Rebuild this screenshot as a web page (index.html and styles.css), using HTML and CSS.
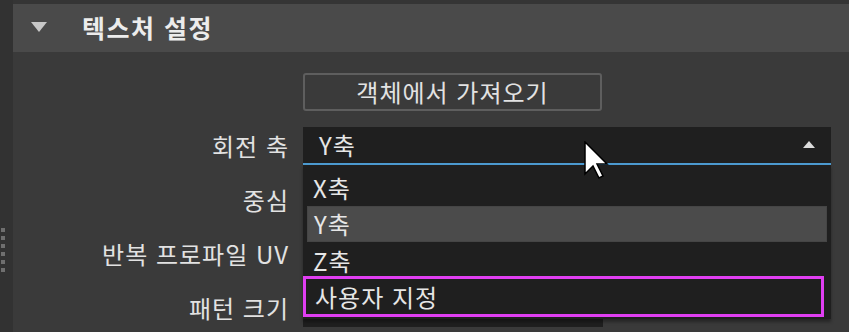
FILE: index.html
```html
<!DOCTYPE html>
<html lang="ko">
<head>
<meta charset="utf-8">
<link rel="stylesheet" href="styles.css">
</head>
<body>
<div class="app">
  <div class="grip">
    <span class="dot"></span><span class="dot"></span><span class="dot"></span>
    <span class="dot"></span><span class="dot"></span><span class="dot"></span>
  </div>
  <div class="main">
    <div class="panel">
      <div class="header">
        <span class="tri-down"></span>
        <span class="title">텍스처 설정</span>
      </div>
      <div class="content">
        <div class="form">
          <div class="label"></div>
          <div class="ctrl"><div class="button">객체에서 가져오기</div></div>

          <div class="label">회전 축</div>
          <div class="ctrl">
            <div class="select"><span>Y축</span><span class="tri-up"></span></div>
          </div>

          <div class="label">중심</div>
          <div class="ctrl"><div class="field"></div></div>

          <div class="label">반복 프로파일 UV</div>
          <div class="ctrl"><div class="field"></div></div>

          <div class="label">패턴 크기</div>
          <div class="ctrl"><div class="field"></div></div>
        </div>

        <div class="menu">
          <div class="item">X축</div>
          <div class="item active">Y축</div>
          <div class="item short">Z축</div>
          <div class="item custom">사용자 지정</div>
        </div>

        <svg class="cursor" width="26" height="40" viewBox="0 0 26 40">
          <polygon points="1,1 1,33 9,25 15,37 19,35 13,23 23,23" fill="#ffffff" stroke="#000000" stroke-width="1.5" stroke-linejoin="miter"/>
        </svg>
      </div>
    </div>
  </div>
</div>
</body>
</html>
```

FILE: styles.css
```css
* { box-sizing: border-box; }
html, body {
  margin: 0;
  padding: 0;
  background: #343434;
  font-family: "Noto Sans CJK KR", "Noto Sans", sans-serif;
  color: #e4e4e4;
}
.app {
  display: flex;
  width: 849px;
  height: 332px;
  overflow: hidden;
}
.grip {
  width: 13px;
  background: #323232;
  display: flex;
  flex-direction: column;
  gap: 4px;
  padding: 228px 0 0 1px;
}
.dot {
  width: 4px;
  height: 4px;
  background: #6f6f6f;
}
.main {
  flex: 1;
  padding-top: 4px;
  background: #353535;
  display: flex;
  flex-direction: column;
}
.panel {
  flex: 1;
  background: #3a3a3a;
}
.header {
  height: 48px;
  background: #4a4a4a;
  display: flex;
  align-items: center;
}
.tri-down {
  width: 0;
  height: 0;
  margin-left: 18px;
  margin-top: -2px;
  border-left: 8px solid transparent;
  border-right: 8px solid transparent;
  border-top: 10px solid #c8c8c8;
}
.title {
  margin-left: 35px;
  font-size: 25px;
  font-weight: bold;
  letter-spacing: 1.5px;
  line-height: 1;
  color: #ececec;
  margin-top: -2px;
}
.content {
  position: relative;
  padding-top: 21px;
}
.form {
  display: grid;
  grid-template-columns: 276px 528px;
  column-gap: 14px;
  grid-auto-rows: 38px;
  row-gap: 16px;
}
.label {
  font-size: 24px;
  letter-spacing: 1px;
  line-height: 38px;
  text-align: right;
  color: #e2e2e2;
}
.ctrl {
  display: flex;
}
.button {
  width: 299px;
  height: 38px;
  border: 2px solid #5e5e5e;
  border-radius: 3px;
  background: #3a3a3a;
  font-size: 24px;
  letter-spacing: 1px;
  line-height: 34px;
  text-align: center;
  color: #e2e2e2;
}
.select {
  width: 528px;
  height: 39px;
  background: #1f1f1f;
  border-bottom: 3px solid #4c9ad0;
  display: flex;
  align-items: center;
  justify-content: space-between;
  padding: 0 16px 0 16px;
  font-size: 24px;
  letter-spacing: 1px;
  line-height: 1;
  color: #e6e6e6;
}
.tri-up {
  width: 0;
  height: 0;
  border-left: 6px solid transparent;
  border-right: 6px solid transparent;
  border-bottom: 7px solid #dcdcdc;
  margin-top: -2px;
}
.field {
  width: 300px;
  height: 38px;
  background: #1f1f1f;
}
.menu {
  position: absolute;
  left: 290px;
  top: 113px;
  width: 528px;
  background: #1f1f1f;
  padding: 5px 0 2px 0;
  box-shadow: 0 3px 3px rgba(0, 0, 0, 0.35);
}
.item {
  height: 36px;
  font-size: 24px;
  letter-spacing: 1px;
  line-height: 36px;
  padding-left: 10px;
  color: #e6e6e6;
}
.item.active {
  margin: 0 4px;
  padding-left: 6px;
  background: #4b4b4b;
  border: 1px solid #454545;
  line-height: 34px;
}
.item.short {
  height: 34px;
  line-height: 38px;
}
.item.custom {
  height: 41px;
  margin-right: 7px;
  border: 3px solid #e03ef2;
  padding-left: 9px;
  line-height: 35px;
}
.cursor {
  position: absolute;
  left: 571px;
  top: 89px;
}
```
